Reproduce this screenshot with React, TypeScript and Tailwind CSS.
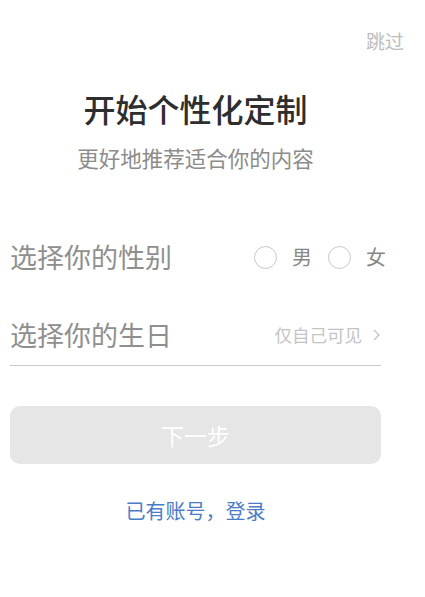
const font = { fontFamily: '"Noto Sans CJK SC", "Noto Sans", sans-serif' }

const Radio = (props: { label: string }) => {
  return (
    <div className="flex items-center">
      <span className="w-[23px] h-[23px] rounded-full border border-[#c8c8c8]" />
      <span className="ml-[15px] text-[20px] leading-[24px] text-[#888888]">{props.label}</span>
    </div>
  )
}

export default function App() {
  return (
    <div className="w-[425px] h-[597px] bg-white overflow-hidden" style={font}>
      <div className="flex justify-end pt-[29px] pr-[21px]">
        <span className="text-[19px] leading-[24px] text-[#bdbdbd]">跳过</span>
      </div>

      <div className="ml-[10px] w-[371px] flex flex-col">
        <h1 className="mt-[36px] text-center text-[32px] leading-[38px] font-medium text-[#2e2e2e]">开始个性化定制</h1>
        <p className="mt-[17px] text-center text-[21.5px] leading-[28px] text-[#8c8c8c]">更好地推荐适合你的内容</p>

        <div className="mt-[65px] flex items-center justify-between h-[40px]">
          <span className="text-[27px] leading-[32px] text-[#8f8f8f]">选择你的性别</span>
          <div className="flex items-center gap-[16px] mr-[-5px]">
            <Radio label="男" />
            <Radio label="女" />
          </div>
        </div>

        <div className="mt-[38px] flex items-center justify-between h-[40px]">
          <span className="text-[27px] leading-[32px] text-[#8f8f8f]">选择你的生日</span>
          <div className="flex items-center">
            <span className="text-[17.5px] leading-[22px] text-[#c4c4c4]">仅自己可见</span>
            <svg className="ml-[10px]" width="9" height="14" viewBox="0 0 9 14" fill="none">
              <path d="M2 2l5 5-5 5" stroke="#c4c4c4" strokeWidth="1.4" />
            </svg>
          </div>
        </div>
        <div className="mt-[10px] h-px bg-[#c9c9c9]" />

        <button className="mt-[40px] h-[58px] rounded-[10px] bg-[#e6e6e6] text-white text-[23px]">下一步</button>

        <p className="mt-[34px] text-center text-[20px] leading-[26px] text-[#4a7cc8]">已有账号，登录</p>
      </div>
    </div>
  )
}
